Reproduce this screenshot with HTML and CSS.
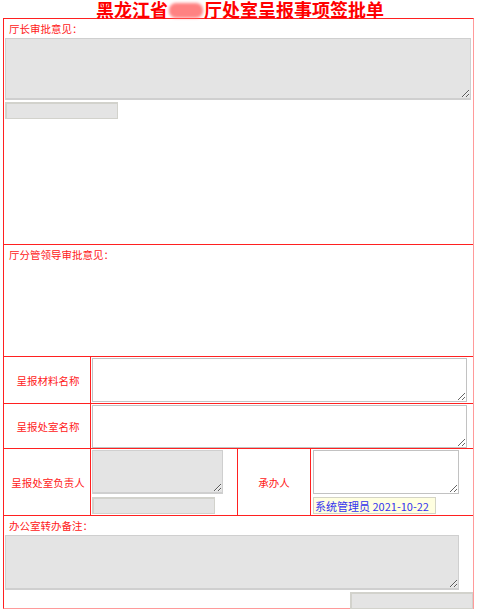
FILE: index.html
```html
<!DOCTYPE html>
<html>
<head>
  <meta charset="utf-8">
  <title>签批单</title>
  <link rel="stylesheet" href="styles.css">
</head>
<body>
  <h1 class="title">黑龙江省<span class="blur"></span>厅处室呈报事项签批单</h1>
  <div class="form">
    <div class="sec sec-chief">
      <p class="label">厅长审批意见：</p>
      <textarea class="area area-wide gray" readonly></textarea>
      <input class="field field-sign" type="text" readonly>
    </div>
    <div class="sec sec-leader">
      <p class="label">厅分管领导审批意见：</p>
    </div>
    <div class="sec row row-material">
      <div class="cell name">呈报材料名称</div>
      <div class="cell">
        <textarea class="area area-row"></textarea>
      </div>
    </div>
    <div class="sec row row-office">
      <div class="cell name">呈报处室名称</div>
      <div class="cell">
        <textarea class="area area-row area-short"></textarea>
      </div>
    </div>
    <div class="sec row row-people">
      <div class="cell name">呈报处室负责人</div>
      <div class="cell stack">
        <textarea class="area area-small gray" readonly></textarea>
        <input class="field field-head" type="text" readonly>
      </div>
      <div class="cell name">承办人</div>
      <div class="cell stack">
        <textarea class="area area-small area-white"></textarea>
        <span class="stamp">系统管理员 2021-10-22</span>
      </div>
    </div>
    <div class="sec sec-note">
      <p class="label">办公室转办备注：</p>
      <textarea class="area area-note gray" readonly></textarea>
      <div class="note-foot">
        <input class="field field-note" type="text" readonly>
      </div>
    </div>
  </div>
</body>
</html>
```

FILE: styles.css
```css
body{
  margin: 0;
  padding: 0 3px;
  background-color: white;
  font-family: "Microsoft YaHei", "Noto Sans CJK SC", sans-serif;
}

.title{
  margin: 0;
  height: 18px;
  line-height: 18px;
  text-align: center;
  color: #ff0000;
  font-size: 18px;
  font-weight: 700;
  padding-left: 2px;
}

.blur{
  display: inline-block;
  width: 34px;
  height: 15px;
  margin: 0 1px;
  vertical-align: -1px;
  background-color: #ff8282;
  border-radius: 7px;
  filter: blur(1.5px);
}

.form{
  width: 471px;
  box-sizing: border-box;
  border: 1px solid #ff2020;
  border-right-color: #ff9a9a;
  border-bottom-color: #ff9a9a;
}

.sec{
  border-bottom: 1px solid #ff2020;
  box-sizing: content-box;
}
.sec-note{
  border-bottom: none;
}

.label{
  margin: 0;
  padding-left: 4px;
  height: 19px;
  line-height: 19px;
  color: #ff2020;
  font-size: 10.5px;
}

.sec-chief{
  height: 225px;
  padding-left: 1px;
}
.sec-leader{
  height: 111px;
  padding-left: 1px;
}
.sec-note{
  height: 92px;
  padding-left: 1px;
}

.area{
  display: block;
  box-sizing: border-box;
  margin: 0;
  padding: 2px;
  border: 1px solid #c2c2c2;
  background-color: white;
  font-family: inherit;
  font-size: 11px;
}
.gray{
  background-color: #e4e4e4;
  border-color: #cfcfcf;
  border-width: 1px 1px 2px 1px;
}

.area-wide{
  width: 466px;
  height: 62px;
}
.area-note{
  width: 454px;
  height: 55px;
}

.field{
  display: block;
  box-sizing: border-box;
  margin: 2px 0 0;
  padding: 0;
  height: 17px;
  border: 2px solid #d2d2cc;
  border-right-width: 1px;
  border-bottom-width: 1px;
  background-color: #e4e4e4;
  outline: none;
}
.field-sign{
  width: 113px;
}
.field-head{
  width: 123px;
  margin-top: 3px;
}

.note-foot{
  display: flex;
  justify-content: flex-end;
}
.field-note{
  width: 123px;
}

.row{
  display: flex;
}
.row-material{
  height: 46px;
}
.row-office{
  height: 44px;
}
.row-people{
  height: 66px;
}

.cell{
  box-sizing: border-box;
  border-left: 1px solid #ff2020;
  padding: 1px;
}
.cell:first-child{
  border-left: none;
}
.name{
  display: flex;
  align-items: center;
  justify-content: center;
  width: 86px;
  color: #ff2020;
  font-size: 10.5px;
  padding: 0 0 0 2px;
}
.row-material .cell:last-child,
.row-office .cell:last-child{
  flex: 1;
}

.area-row{
  width: 375px;
  height: 44px;
}
.area-short{
  height: 43px;
}

.row-people .cell:nth-child(2){
  width: 147px;
}
.row-people .cell:nth-child(3){
  width: 73px;
  padding-left: 0;
}
.row-people .cell:nth-child(4){
  flex: 1;
  padding-left: 2px;
}

.area-small{
  width: 131px;
  height: 46px;
}
.area-white{
  width: 146px;
}

.stamp{
  display: inline-block;
  align-self: flex-start;
  margin-top: 3px;
  padding: 0 6px 0 1px;
  height: 17px;
  line-height: 16px;
  box-sizing: border-box;
  border: 1px solid #d4d4c4;
  background-color: #ffffe0;
  color: #3333ee;
  font-size: 11px;
  white-space: nowrap;
}

.stack{
  display: flex;
  flex-direction: column;
}
```
